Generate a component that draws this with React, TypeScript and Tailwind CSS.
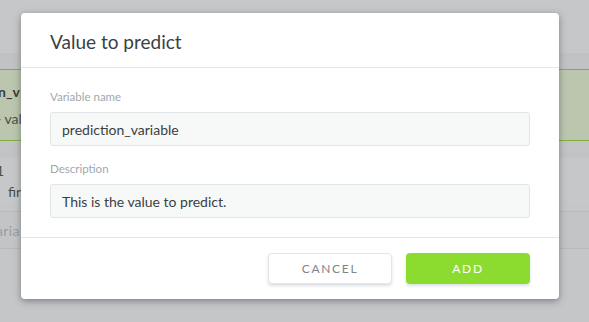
import React from "react";

const font = { fontFamily: 'Lato, "Open Sans", "Noto Sans", sans-serif' };

function Field({ label, value }: { label: string; value: string }) {
  return (
    <div className="flex flex-col">
      <label className="text-[11.5px] leading-[16px] text-[#a3a7ab] mb-[7px]">{label}</label>
      <div className="h-[34px] rounded-[3px] border border-[#e2e5e7] bg-[#f7f8f8] px-[11px] flex items-center text-[14px] text-[#3a3f44]">
        {value}
      </div>
    </div>
  );
}

export default function App() {
  return (
    <div className="relative w-[589px] h-[322px] overflow-hidden bg-[#c5c6c7]" style={font}>
      {/* page behind the overlay */}
      <div className="flex flex-col">
        <div className="h-[53px] bg-[#c6c7c8]" />
        <div className="h-[16px] bg-[#c1c2c3]" />
        <div className="h-[72px] bg-[#bcc6ae] border-y border-[#7cb13a] flex flex-col justify-center gap-[6px] text-[14px] text-[#3a3d3a]">
          <span className="font-bold -ml-[10px]">on_v</span>
          <span className="-ml-[4px] text-[#4a4d48]">- valu</span>
        </div>
        <div className="h-[17px] bg-[#c2c3c4]" />
        <div className="h-[45px] bg-[#c6c7c8] flex flex-col justify-center text-[14px] text-[#4a4c4e]">
          <span className="-ml-[4px]">1</span>
          <span className="ml-[8px]">firs</span>
        </div>
        <div className="h-[8px]" />
        <div className="h-[38px] border-y border-[#b6b8ba] bg-[#c3c4c5] flex items-center text-[14px] text-[#9a9da0] tracking-wide">
          <span className="-ml-[4px]">aria</span>
        </div>
      </div>

      {/* modal */}
      <div className="absolute left-[21px] top-[13px] w-[538px] h-[286px] bg-white rounded-[4px] shadow-[0_2px_7px_rgba(60,70,80,0.55)] flex flex-col">
        <div className="h-[55px] border-b border-[#e3e6e8] px-[29px] flex items-center">
          <h2 className="text-[19px] text-[#3a3f45] leading-none pt-[2px]">Value to predict</h2>
        </div>
        <div className="h-[170px] border-b border-[#e3e6e8] px-[29px] pt-[21px] flex flex-col gap-[15px]">
          <Field label="Variable name" value="prediction_variable" />
          <Field label="Description" value="This is the value to predict." />
        </div>
        <div className="flex-1 flex items-center justify-end gap-[14px] px-[29px]">
          <button className="w-[124px] h-[31px] rounded-[4px] border border-[#e3e5e7] bg-white text-[12px] tracking-[0.14em] text-[#7f848a] shadow-[0_2px_3px_rgba(120,130,140,0.25)]">
            CANCEL
          </button>
          <button className="w-[124px] h-[31px] rounded-[4px] bg-[#8cdc2f] text-[12px] tracking-[0.14em] text-white shadow-[0_2px_3px_rgba(120,130,140,0.25)]">
            ADD
          </button>
        </div>
      </div>
    </div>
  );
}
